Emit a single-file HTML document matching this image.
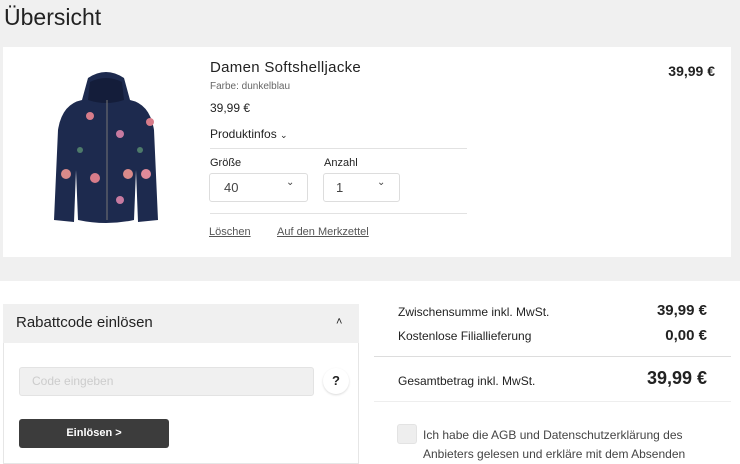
<!DOCTYPE html>
<html><head><meta charset="utf-8"><style>
*{margin:0;padding:0;box-sizing:border-box}
body{width:740px;height:459px;overflow:hidden;background:#fff;font-family:"Liberation Sans",sans-serif;color:#222;position:relative}
.top{position:absolute;left:0;top:0;width:740px;height:281px;background:#f0f0f0}
.a{position:absolute;white-space:nowrap}
.card{position:absolute;left:3px;top:47px;width:728px;height:210px;background:#fff}
.sel{position:absolute;height:29px;border:1px solid #ddd;border-radius:3px;background:#fff;font-size:13px;color:#444}
.hr{position:absolute;height:1px;background:#e2e2e2}
.r{text-align:right}
</style></head><body>
<div class="top"></div>
<div class="a" style="left:4px;top:4px;font-size:23px;color:#222">Übersicht</div>
<div class="card"></div>
<svg class="a" style="left:50px;top:70px" width="112" height="160" viewBox="0 0 112 160">
<path d="M38 8 Q56 -4 74 8 L80 30 Q100 34 104 60 L108 150 L88 152 L86 100 L84 150 Q56 156 28 150 L26 100 L24 152 L4 150 L8 60 Q12 34 32 30 Z" fill="#1d2a4e"/>
<path d="M40 12 Q56 4 72 12 L74 30 Q56 36 38 30Z" fill="#141d3a"/>
<line x1="57" y1="30" x2="57" y2="150" stroke="#777" stroke-width="1"/>
<circle cx="40" cy="46" r="4" fill="#d77c8a"/><circle cx="100" cy="52" r="4" fill="#d77c8a"/>
<circle cx="45" cy="108" r="5" fill="#d77c8a"/><circle cx="78" cy="104" r="5" fill="#d98a8a"/>
<circle cx="16" cy="104" r="5" fill="#d98a8a"/><circle cx="96" cy="104" r="5" fill="#e08a9a"/>
<circle cx="70" cy="64" r="4" fill="#c77aa0"/><circle cx="70" cy="130" r="4" fill="#c77aa0"/>
<circle cx="90" cy="80" r="3" fill="#4d7a6a"/><circle cx="30" cy="80" r="3" fill="#4d7a6a"/>
</svg>
<div class="a" style="left:210px;top:59px;font-size:15px;color:#222;letter-spacing:.3px">Damen Softshelljacke</div>
<div class="a" style="left:210px;top:81px;font-size:10px;color:#666">Farbe: dunkelblau</div>
<div class="a" style="left:210px;top:101px;font-size:12px;color:#222">39,99 €</div>
<div class="a" style="left:210px;top:127px;font-size:12px;color:#222">Produktinfos <span style="font-size:9px">⌄</span></div>
<div class="hr" style="left:210px;top:148px;width:257px"></div>
<div class="a" style="left:210px;top:157px;font-size:11px">Größe</div>
<div class="a" style="left:324px;top:157px;font-size:11px">Anzahl</div>
<div class="sel" style="left:209px;top:173px;width:99px"><span class="a" style="left:14px;top:6px">40</span><span class="a" style="left:76px;top:3px;font-size:10px">⌄</span></div>
<div class="sel" style="left:323px;top:173px;width:77px"><span class="a" style="left:12px;top:6px">1</span><span class="a" style="left:53px;top:3px;font-size:10px">⌄</span></div>
<div class="hr" style="left:210px;top:213px;width:257px"></div>
<div class="a" style="left:209px;top:226px;font-size:11px;color:#555;text-decoration:underline">Löschen</div>
<div class="a" style="left:277px;top:226px;font-size:11px;color:#555;text-decoration:underline">Auf den Merkzettel</div>
<div class="a r" style="right:25px;top:63px;font-size:14px;font-weight:bold;color:#222">39,99 €</div>

<div class="a" style="left:3px;top:304px;width:356px;height:160px;border:1px solid #e6e6e6"></div>
<div class="a" style="left:3px;top:304px;width:356px;height:39px;background:#f0f0f0"></div>
<div class="a" style="left:16px;top:314px;font-size:15px;color:#222">Rabattcode einlösen</div>
<div class="a" style="left:336px;top:316px;font-size:11px">˄</div>
<div class="a" style="left:19px;top:367px;width:295px;height:29px;background:#f0f0f0;border:1px solid #e3e3e3;border-radius:3px"></div>
<div class="a" style="left:32px;top:374px;font-size:12px;color:#ccc">Code eingeben</div>
<div class="a" style="left:323px;top:368px;width:26px;height:26px;border-radius:50%;background:#fff;box-shadow:0 1px 2px rgba(0,0,0,.15);font-size:13px;font-weight:bold;text-align:center;line-height:26px">?</div>
<div class="a" style="left:19px;top:419px;width:150px;height:29px;background:#3c3c3c;border-radius:3px;color:#fff;font-size:11px;font-weight:bold;text-align:center;line-height:29px">Einlösen &gt;</div>

<div class="a" style="left:398px;top:305px;font-size:12px">Zwischensumme inkl. MwSt.</div>
<div class="a r" style="right:33px;top:302px;font-size:15px;font-weight:bold">39,99 €</div>
<div class="a" style="left:398px;top:329px;font-size:12px">Kostenlose Filiallieferung</div>
<div class="a r" style="right:33px;top:327px;font-size:15px;font-weight:bold">0,00 €</div>
<div class="hr" style="left:374px;top:356px;width:357px;background:#ddd"></div>
<div class="a" style="left:398px;top:374px;font-size:12px">Gesamtbetrag inkl. MwSt.</div>
<div class="a r" style="right:33px;top:368px;font-size:18px;font-weight:bold">39,99 €</div>
<div class="hr" style="left:374px;top:401px;width:357px;background:#eee"></div>
<div class="a" style="left:397px;top:424px;width:20px;height:20px;background:#eee;border:1px solid #e3e3e3;border-radius:3px"></div>
<div class="a" style="left:423px;top:426px;font-size:12px;color:#444;line-height:19px">Ich habe die AGB und Datenschutzerklärung des<br>Anbieters gelesen und erkläre mit dem Absenden</div>
</body></html>
